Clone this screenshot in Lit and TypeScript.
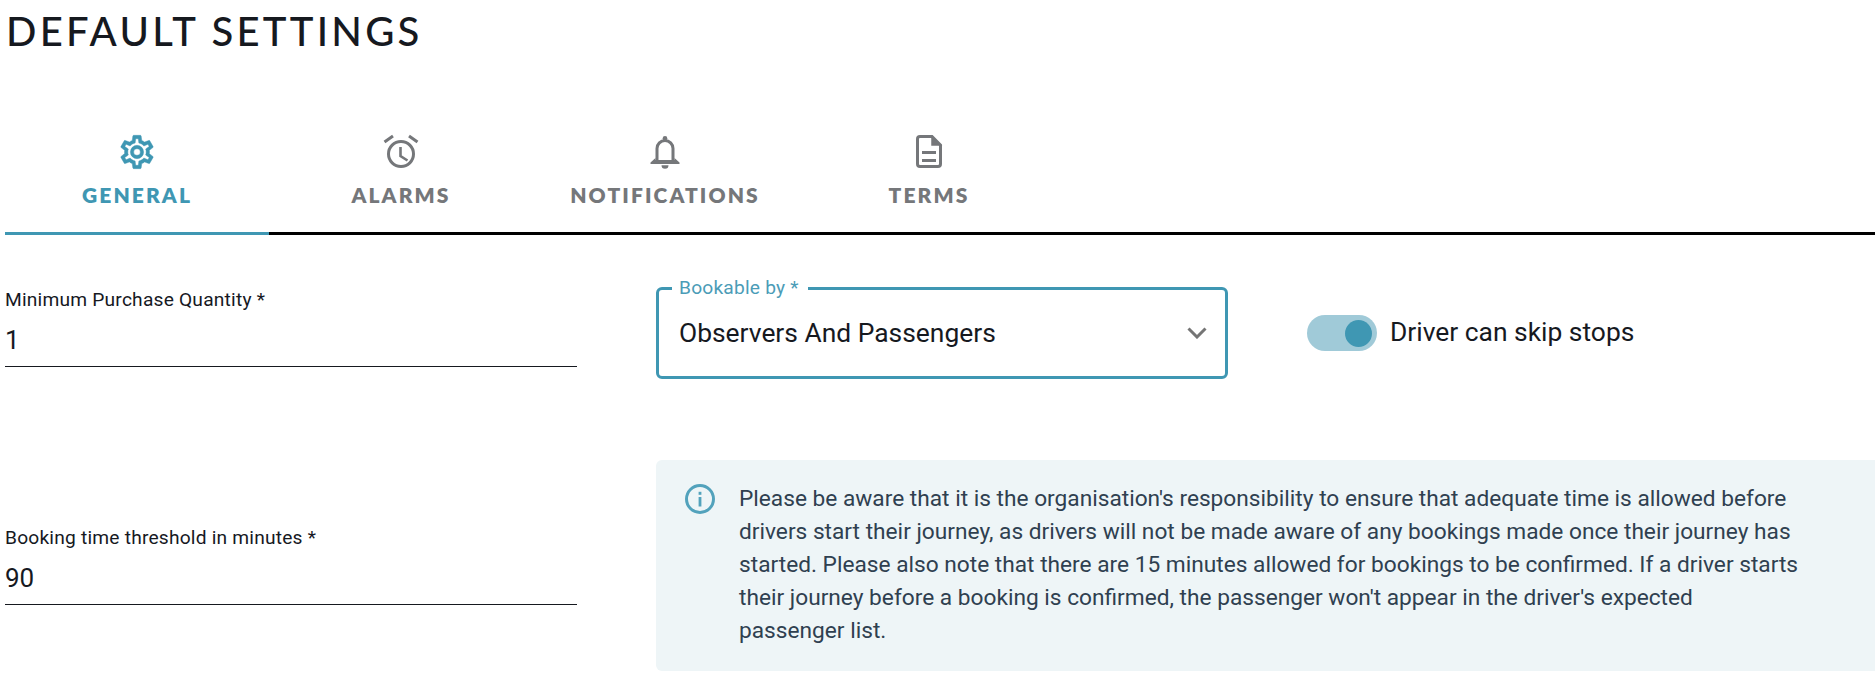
import { LitElement, html, css, svg } from "lit";
import { customElement } from "lit/decorators.js";

const icons = {
  gear: svg`<g transform="scale(1.6667)"><path stroke="currentColor" stroke-width="0.25" d="M12,8A4,4 0 0,1 16,12A4,4 0 0,1 12,16A4,4 0 0,1 8,12A4,4 0 0,1 12,8M12,10A2,2 0 0,0 10,12A2,2 0 0,0 12,14A2,2 0 0,0 14,12A2,2 0 0,0 12,10M10,22C9.75,22 9.54,21.82 9.5,21.58L9.13,18.93C8.5,18.68 7.96,18.34 7.44,17.94L4.95,18.95C4.73,19.03 4.46,18.95 4.34,18.73L2.34,15.27C2.21,15.05 2.27,14.78 2.46,14.63L4.57,12.97L4.5,12L4.57,11L2.46,9.37C2.27,9.22 2.21,8.95 2.34,8.73L4.34,5.27C4.46,5.05 4.73,4.96 4.95,5.05L7.44,6.05C7.96,5.66 8.5,5.32 9.13,5.07L9.5,2.42C9.54,2.18 9.75,2 10,2H14C14.25,2 14.46,2.18 14.5,2.42L14.87,5.07C15.5,5.32 16.04,5.66 16.56,6.05L19.05,5.05C19.27,4.96 19.54,5.05 19.66,5.27L21.66,8.73C21.79,8.95 21.73,9.22 21.54,9.37L19.43,11L19.5,12L19.43,13L21.54,14.63C21.73,14.78 21.79,15.05 21.66,15.27L19.66,18.73C19.54,18.95 19.27,19.04 19.05,18.95L16.56,17.95C16.04,18.34 15.5,18.68 14.87,18.93L14.5,21.58C14.46,21.82 14.25,22 14,22H10M11.25,4L10.88,6.61C9.68,6.86 8.62,7.5 7.85,8.39L5.44,7.35L4.69,8.65L6.8,10.2C6.4,11.37 6.4,12.64 6.8,13.8L4.68,15.36L5.43,16.66L7.86,15.62C8.63,16.5 9.68,17.14 10.87,17.38L11.24,20H12.76L13.13,17.39C14.32,17.14 15.37,16.5 16.14,15.62L18.57,16.66L19.32,15.36L17.2,13.81C17.6,12.64 17.6,11.37 17.2,10.2L19.31,8.65L18.56,7.35L16.15,8.39C15.38,7.5 14.32,6.86 13.12,6.62L12.75,4H11.25Z"/></g>`,
  alarm: svg`
    <circle cx="20" cy="22" r="12.5" fill="none" stroke="currentColor" stroke-width="3"/>
    <path d="M3.5 10 12 4M28 4 36.5 10" fill="none" stroke="currentColor" stroke-width="3"/>
    <path d="M19.5 15V24L26.5 28.5" fill="none" stroke="currentColor" stroke-width="2.6"/>`,
  bell: svg`
    <circle cx="20" cy="6.2" r="2.3"/>
    <path d="M12 28V16.5A8 8 0 0 1 28 16.5V28" fill="none" stroke="currentColor" stroke-width="3"/>
    <path d="M10.5 26L5.5 30.5V32H34.5V30.5L29.5 26V28H10.5Z"/>
    <path d="M16.5 33.2H23.5A3.5 3.5 0 0 1 16.5 33.2Z"/>`,
  file: svg`
    <path d="M11 4.5H23L31.5 13V32A2.5 2.5 0 0 1 29 34.5H11A2.5 2.5 0 0 1 8.5 32V7A2.5 2.5 0 0 1 11 4.5Z" fill="none" stroke="currentColor" stroke-width="3"/>
    <path d="M23 4.5L31.5 13H23Z" stroke="currentColor" stroke-width="1.5"/>
    <rect x="13" y="19" width="14" height="3"/>
    <rect x="13" y="27" width="14" height="3"/>`,
};

const tabs = [
  { key: "gear", label: "GENERAL", active: true },
  { key: "alarm", label: "ALARMS", active: false },
  { key: "bell", label: "NOTIFICATIONS", active: false },
  { key: "file", label: "TERMS", active: false },
] as const;

@customElement("app-root")
export class AppRoot extends LitElement {
  static styles = css`
    :host {
      display: block;
      background: #fff;
      font-family: Roboto, "Liberation Sans", sans-serif;
      color: #16191f;
      height: 685px;
      overflow: hidden;
    }
    h1 {
      margin: 0;
      padding: 7px 0 0 6px;
      height: 52px;
      font-family: Lato, sans-serif;
      font-weight: 500;
      font-size: 40px;
      line-height: 48px;
      letter-spacing: 3.25px;
      color: #16191f;
    }
    .tabs {
      display: flex;
      margin: 61px 0 0 5px;
      border-bottom: 3px solid #000;
      height: 112px;
      box-sizing: content-box;
    }
    .tab {
      width: 264px;
      display: flex;
      flex-direction: column;
      align-items: center;
      color: #75777a;
      position: relative;
      padding-top: 12px;
      box-sizing: border-box;
    }
    .tab.active { color: #3f97b3; }
    .tab.active::after {
      content: "";
      position: absolute;
      left: 0;
      right: 0;
      bottom: -3px;
      height: 3px;
      background: #3f97b3;
    }
    .tab svg { width: 40px; height: 40px; fill: currentColor; }
    .tab span {
      margin-top: 11px;
      font-family: Lato, sans-serif;
      font-weight: 800;
      font-size: 21px;
      line-height: 24px;
      letter-spacing: 2.1px;
    }
    .content {
      display: grid;
      grid-template-columns: 572px 1fr;
      column-gap: 79px;
      row-gap: 81px;
      padding: 52px 0 0 5px;
    }
    .field { display: flex; flex-direction: column; }
    .field.first { margin-top: 1px; align-self: start; }
    .field.second { align-self: center; }
    .field label { font-size: 19.2px; line-height: 24px; letter-spacing: 0.2px; }
    .field .value {
      font-size: 26px;
      line-height: 28px;
      padding: 14px 0 12px;
      border-bottom: 1px solid #16191f;
    }
    .top-right { display: flex; align-items: center; gap: 79px; }
    .select {
      position: relative;
      box-sizing: border-box;
      width: 572px;
      height: 92px;
      border: 3px solid #3f97b3;
      border-radius: 6px;
      padding: 0 18px 0 20px;
      display: flex;
      align-items: center;
      justify-content: space-between;
      font-size: 26.4px;
    }
    .select .legend {
      position: absolute;
      left: 13px;
      top: -14px;
      padding: 0 9px 0 7px;
      background: #fff;
      font-size: 19.2px;
      line-height: 24px;
      letter-spacing: 0.2px;
      color: #4b9cb7;
    }
    .select svg { width: 20px; height: 12px; fill: none; stroke: #757575; stroke-width: 3; }
    .switch { display: flex; align-items: center; gap: 13px; font-size: 26.4px; }
    .switch span { padding-bottom: 2px; }
    .track {
      width: 70px;
      height: 36px;
      border-radius: 18px;
      background: #a0cad8;
      display: flex;
      align-items: center;
      justify-content: flex-end;
      padding-right: 5px;
      box-sizing: border-box;
    }
    .thumb { width: 27px; height: 27px; border-radius: 50%; background: #3f97b3; }
    .alert {
      background: #eef5f7;
      border-radius: 6px 0 0 6px;
      height: 211px;
      box-sizing: border-box;
      display: flex;
      gap: 24px;
      padding: 22px 40px 0 29px;
      color: #2f4050;
      font-size: 22.7px;
      line-height: 33px;
    }
    .alert svg { flex: none; width: 30px; height: 30px; margin-top: 2px; }
  `;

  render() {
    return html`
      <h1>DEFAULT SETTINGS</h1>
      <div class="tabs">
        ${tabs.map(
          (t) => html`<div class="tab ${t.active ? "active" : ""}">
            <svg viewBox="0 0 40 40">${icons[t.key]}</svg>
            <span>${t.label}</span>
          </div>`
        )}
      </div>
      <div class="content">
        <div class="field first">
          <label>Minimum Purchase Quantity *</label>
          <div class="value">1</div>
        </div>
        <div class="top-right">
          <div class="select">
            <div class="legend">Bookable by *</div>
            <span>Observers And Passengers</span>
            <svg viewBox="0 0 20 12"><path d="M1.5 1.5 10 10 18.5 1.5"/></svg>
          </div>
          <div class="switch">
            <div class="track"><div class="thumb"></div></div>
            <span>Driver can skip stops</span>
          </div>
        </div>
        <div class="field second">
          <label>Booking time threshold in minutes *</label>
          <div class="value">90</div>
        </div>
        <div class="alert">
          <svg viewBox="0 0 30 30">
            <circle cx="15" cy="15" r="13.5" fill="none" stroke="#52a2bc" stroke-width="3"/>
            <rect x="13.6" y="13" width="2.8" height="9.5" fill="#52a2bc"/>
            <rect x="13.6" y="7.8" width="2.8" height="3" fill="#52a2bc"/>
          </svg>
          <div>
            Please be aware that it is the organisation's responsibility to ensure that adequate time is allowed before drivers start their journey, as drivers will not be made aware of any bookings made once their journey has started. Please also note that there are 15 minutes allowed for bookings to be confirmed. If a driver starts their journey before a booking is confirmed, the passenger won't appear in the driver's expected<br />passenger list.
          </div>
        </div>
      </div>
    `;
  }
}
